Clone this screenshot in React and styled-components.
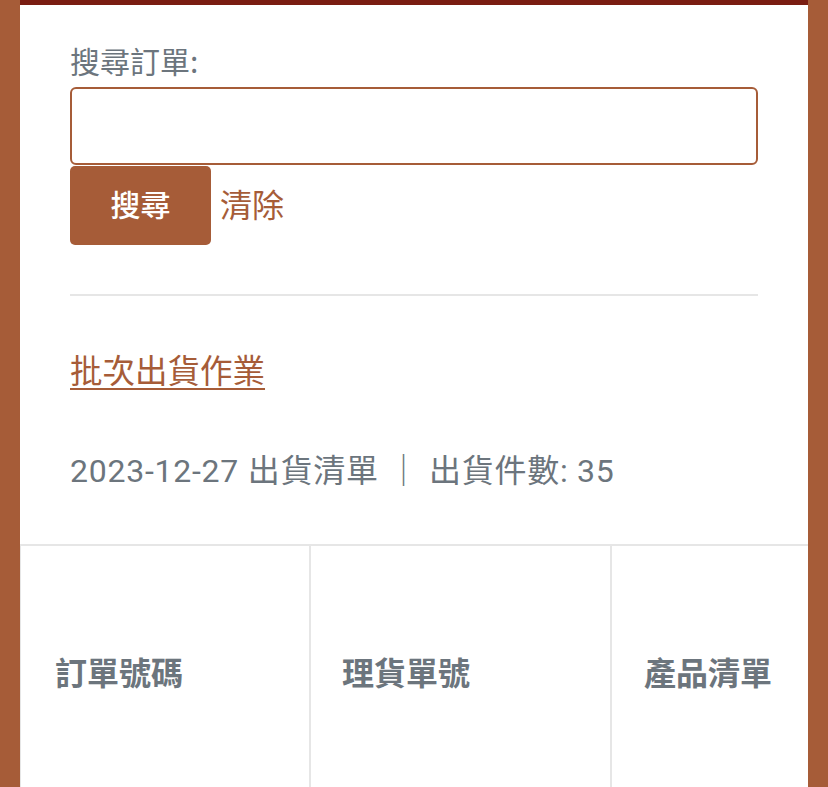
import React, { useState } from 'react'
import styled, { createGlobalStyle } from 'styled-components'

const GlobalStyle = createGlobalStyle`
	body {
		margin: 0;
		background: #a65c38;
		font-family: "Noto Sans CJK TC", "Noto Sans", sans-serif;
	}
`;

const Page = styled.div`
	padding: 0 20px;
	min-height: 787px;
	box-sizing: border-box;
`;

const Panel = styled.div`
	background: #ffffff;
	border-top: 5px solid #7a1d12;
	min-height: 782px;
	overflow: hidden;
`;

const Section = styled.div`
	padding: 32px 50px 0;
`;

const Label = styled.label`
	display: block;
	font-size: 30px;
	line-height: 46px;
	color: #6c757d;
	margin-bottom: 4px;
`;

const SearchInput = styled.input`
	display: block;
	width: 100%;
	height: 78px;
	box-sizing: border-box;
	border: 2px solid #a65c38;
	border-radius: 6px;
	padding: 0 16px;
	font-size: 28px;
	outline: none;
`;

const Actions = styled.div`
	display: flex;
	align-items: center;
	margin-top: 1px;
`;

const Button = styled.button`
	width: 141px;
	height: 79px;
	border: none;
	border-radius: 5px;
	padding: 0 0 5px;
	background: #a65c38;
	color: #ffffff;
	font-family: inherit;
	font-size: 30px;
	font-weight: 500;
	cursor: pointer;
`;

const TextButton = styled.button`
	border: none;
	background: none;
	padding: 0 0 6px;
	margin-left: 9px;
	color: #a65c38;
	font-family: inherit;
	font-size: 32px;
	cursor: pointer;
`;

const Divider = styled.hr`
	border: none;
	border-top: 2px solid #e6e6e6;
	margin: 49px 0 0;
`;

const Link = styled.a`
	display: inline-block;
	margin-top: 49px;
	font-size: 32.5px;
	line-height: 48px;
	color: #a65c38;
	text-decoration: underline;
	text-decoration-thickness: 2px;
	text-underline-offset: 5px;
`;

const Info = styled.div`
	margin-top: 56px;
	font-family: Roboto, "Noto Sans CJK TC", sans-serif;
	font-size: 32px;
	line-height: 44px;
	color: #6c757d;
	letter-spacing: 0.75px;
`;

const Table = styled.div`
	display: grid;
	grid-template-columns: 290px 301px 300px;
	margin-top: 51px;
	margin-left: -1px;
	border-top: 2px solid #e6e6e6;
`;

const HeadCell = styled.div`
	height: 250px;
	display: flex;
	align-items: center;
	padding-left: ${props => props.$pad}px;
	border-left: 2px solid #e6e6e6;
	font-size: 32px;
	font-weight: 700;
	color: #6c757d;
	white-space: nowrap;
`;

const columns = [
	{ title: '訂單號碼', pad: 34 },
	{ title: '理貨單號', pad: 31 },
	{ title: '產品清單', pad: 32 },
];

export default function App() {
	const [query, setQuery] = useState('');

	return (
		<>
			<GlobalStyle />
			<Page>
				<Panel>
					<Section>
						<Label>搜尋訂單:</Label>
						<SearchInput value={query} onChange={e => setQuery(e.target.value)} />
						<Actions>
							<Button>搜尋</Button>
							<TextButton onClick={() => setQuery('')}>清除</TextButton>
						</Actions>
						<Divider />
						<Link href="#">批次出貨作業</Link>
						<Info>2023-12-27 出貨清單 ｜ 出貨件數: 35</Info>
					</Section>
					<Table>
						{columns.map(col => (
							<HeadCell key={col.title} $pad={col.pad}>{col.title}</HeadCell>
						))}
					</Table>
				</Panel>
			</Page>
		</>
	);
}
